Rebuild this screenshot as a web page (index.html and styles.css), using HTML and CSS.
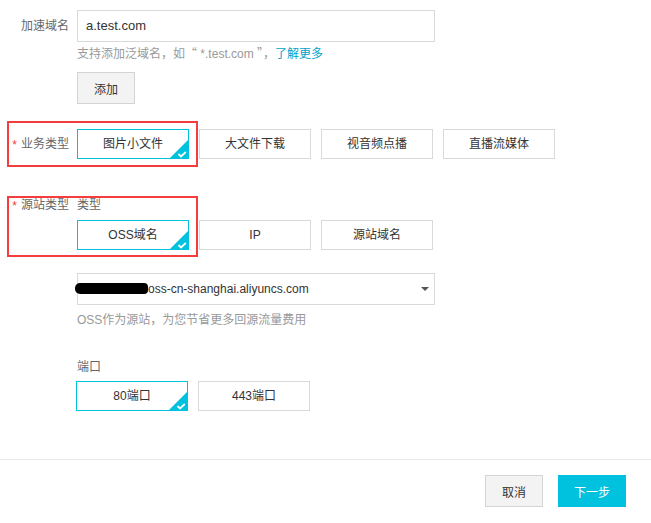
FILE: index.html
```html
<!DOCTYPE html>
<html lang="zh-CN">
<head>
<meta charset="utf-8">
<title>添加域名</title>
<link rel="stylesheet" href="styles.css">
</head>
<body>
<div class="page">
  <div class="field domain">
    <div class="lbl">加速域名</div>
    <div class="ctl">
      <div class="input">a.test.com</div>
      <div class="help">支持添加泛域名，如<span class="cjk">“</span> *.test.com <span class="cjk">”</span>，<a class="link">了解更多</a></div>
      <button class="btn add">添加</button>
    </div>
  </div>

  <div class="field biz">
    <div class="hl hl-biz"></div>
    <div class="lbl lbl-opt"><span class="req">*</span>业务类型</div>
    <div class="ctl">
      <div class="opts">
        <div class="opt on">图片小文件<svg class="tick" viewBox="0 0 18 18"><path d="M18 0V18H0Z" fill="#00c1de"/><path d="M8.5 14l2.5 2.4L15.8 12" stroke="#fff" stroke-width="1.8" fill="none"/></svg></div>
        <div class="opt">大文件下载</div>
        <div class="opt">视音频点播</div>
        <div class="opt">直播流媒体</div>
      </div>
    </div>
  </div>

  <div class="field origin">
    <div class="hl hl-origin"></div>
    <div class="lbl lbl-top"><span class="req">*</span>源站类型</div>
    <div class="ctl">
      <div class="sub">类型</div>
      <div class="opts type-opts">
        <div class="opt on">OSS域名<svg class="tick" viewBox="0 0 18 18"><path d="M18 0V18H0Z" fill="#00c1de"/><path d="M8.5 14l2.5 2.4L15.8 12" stroke="#fff" stroke-width="1.8" fill="none"/></svg></div>
        <div class="opt">IP</div>
        <div class="opt">源站域名</div>
      </div>
      <div class="select"><span class="redact"></span><span class="sel-text">oss-cn-shanghai.aliyuncs.com</span><span class="caret"></span></div>
      <div class="help help-oss">OSS作为源站，为您节省更多回源流量费用</div>
      <div class="sub port-lbl">端口</div>
      <div class="opts port-opts">
        <div class="opt on">80端口<svg class="tick" viewBox="0 0 18 18"><path d="M18 0V18H0Z" fill="#00c1de"/><path d="M8.5 14l2.5 2.4L15.8 12" stroke="#fff" stroke-width="1.8" fill="none"/></svg></div>
        <div class="opt">443端口</div>
      </div>
    </div>
  </div>

  <div class="footer">
    <button class="btn cancel">取消</button>
    <button class="btn primary">下一步</button>
  </div>
</div>
</body>
</html>
```

FILE: styles.css
```css
* { box-sizing: border-box; }
html, body { margin: 0; padding: 0; background: #fff; }
body {
  font-family: "Liberation Sans", Arial, "Noto Sans CJK SC", sans-serif;
  font-size: 12px;
  color: #333;
}
.page { padding-top: 10px; }

.field { display: flex; position: relative; }
.lbl {
  width: 69px;
  margin-right: 8px;
  flex-shrink: 0;
  text-align: right;
  color: #666;
  line-height: 32px;
  white-space: nowrap;
}
.lbl-opt { line-height: 30px; }
.lbl-top { line-height: 18px; padding-top: 0; }
.req { color: #f03c3c; margin-right: 4px; position: relative; top: 1px; }
.ctl { flex: 1; }

.input {
  width: 358px;
  height: 32px;
  border: 1px solid #d9d9d9;
  padding: 0 8px;
  font-size: 13px;
  line-height: 30px;
  color: #333;
}
.help { margin-top: 3px; height: 18px; line-height: 18px; color: #999; white-space: nowrap; }
.cjk { font-family: "Noto Sans CJK SC", sans-serif; line-height: 1; }
.link { color: #00a2ca; text-decoration: none; }

.btn {
  font-family: inherit;
  font-size: 12px;
  height: 32px;
  border: 1px solid #d4d4d4;
  background: #f3f3f3;
  color: #333;
  padding: 0;
  cursor: pointer;
}
.add { width: 58px; margin-top: 9px; display: block; }

.biz { margin-top: 25px; }
.origin { margin-top: 37px; }

.opts { display: flex; gap: 10px; }
.opt {
  position: relative;
  width: 112px;
  height: 30px;
  border: 1px solid #d9d9d9;
  text-align: center;
  line-height: 28px;
  color: #333;
  background: #fff;
}
.opt.on { border-color: #00c1de; }
.tick { position: absolute; right: 0; bottom: 0; width: 18px; height: 18px; display: block; }

.hl {
  position: absolute;
  border: 2px solid #f53d3d;
  left: 7px;
  width: 191px;
  pointer-events: none;
}
.hl-biz { top: -8px; height: 46px; }
.hl-origin { top: 0; height: 61px; }

.sub { line-height: 18px; color: #666; }
.type-opts { margin-top: 6px; }

.select {
  position: relative;
  margin-top: 23px;
  width: 358px;
  height: 32px;
  border: 1px solid #d9d9d9;
  line-height: 30px;
  padding-right: 20px;
  white-space: nowrap;
  font-size: 12px;
  color: #333;
}
.redact {
  display: inline-block;
  vertical-align: middle;
  width: 73px;
  height: 11px;
  margin-left: -3px;
  margin-top: -3px;
  background: #000;
  border-radius: 5px 4px 4px 5px;
}
.caret {
  position: absolute;
  right: 5px;
  top: 13px;
  width: 0;
  height: 0;
  border-left: 4px solid transparent;
  border-right: 4px solid transparent;
  border-top: 4px solid #555;
}
.help-oss { margin-top: 6px; }
.port-lbl { margin-top: 29px; }
.port-opts { margin-top: 5px; margin-left: -1px; }

.footer {
  margin-top: 48px;
  border-top: 1px solid #e8e8e8;
  padding: 15px 25px 0 0;
  display: flex;
  justify-content: flex-end;
  gap: 15px;
}
.cancel { width: 58px; }
.primary {
  width: 68px;
  background: #00c1de;
  border-color: #00c1de;
  color: #fff;
}
```
